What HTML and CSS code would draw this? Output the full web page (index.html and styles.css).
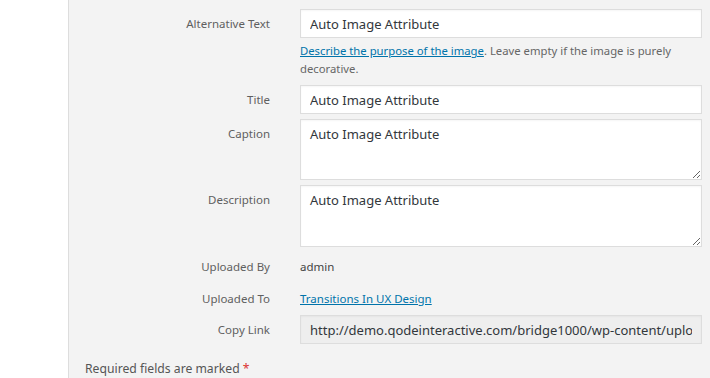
FILE: index.html
```html
<!DOCTYPE html>
<html lang="en">
<head>
    <meta charset="UTF-8">
    <meta name="viewport" content="width=device-width, initial-scale=1.0">
    <title>Attachment Details</title>
    <link rel="stylesheet" href="styles.css">
</head>
<body>
    <div class="side"></div>
    <div class="panel">
        <div class="field">
            <label for="alt">Alternative Text</label>
            <div>
                <input type="text" id="alt" value="Auto Image Attribute">
                <p class="help"><a href="#">Describe the purpose of the image</a>. Leave empty if the image is purely decorative.</p>
            </div>
        </div>
        <div class="field">
            <label for="title">Title</label>
            <input type="text" id="title" value="Auto Image Attribute">
        </div>
        <div class="field">
            <label for="caption">Caption</label>
            <textarea id="caption">Auto Image Attribute</textarea>
        </div>
        <div class="field">
            <label for="description">Description</label>
            <textarea id="description">Auto Image Attribute</textarea>
        </div>
        <div class="field info by">
            <span class="name">Uploaded By</span>
            <span class="value">admin</span>
        </div>
        <div class="field info to">
            <span class="name">Uploaded To</span>
            <span class="value"><a href="#">Transitions In UX Design</a></span>
        </div>
        <div class="field">
            <label for="link">Copy Link</label>
            <input type="text" id="link" class="readonly" readonly value="http://demo.qodeinteractive.com/bridge1000/wp-content/uploads/2017/08/image.jpg">
        </div>
        <p class="required">Required fields are marked <span class="star">*</span></p>
    </div>
</body>
</html>
```

FILE: styles.css
```css
body {
    margin: 0;
    display: flex;
    height: 100vh;
    overflow: hidden;
    font-family: "Noto Sans", Arial, sans-serif;
    font-size: 11.5px;
    color: #444;
    background-color: #fff;
}
.side {
    width: 68px;
    flex-shrink: 0;
    background-color: #fff;
    border-right: 1px solid #ddd;
}
.panel {
    flex: 1;
    background-color: #f3f3f3;
    padding-top: 9px;
}
.field {
    display: grid;
    grid-template-columns: 201px 402px;
    column-gap: 30px;
    margin-bottom: 5px;
}
.field label,
.field .name {
    text-align: right;
    color: #5f5f5f;
    line-height: 20px;
    padding-top: 5px;
}
input,
textarea {
    display: block;
    box-sizing: border-box;
    width: 100%;
    margin: 0;
    border: 1px solid #ddd;
    background-color: #fff;
    color: #32373c;
    font-family: "Noto Sans", Arial, sans-serif;
    font-size: 13px;
    box-shadow: inset 0 1px 2px rgba(0, 0, 0, 0.04);
}
input {
    height: 29px;
    padding: 0 9px;
}
textarea {
    height: 61px;
    padding: 4px 9px;
    line-height: 20px;
    resize: vertical;
}
textarea#description {
    height: 62px;
}
input.readonly {
    background-color: #eee;
}
.help {
    margin: 4px 0 2px;
    color: #666;
    font-size: 11.3px;
    line-height: 18px;
}
a {
    color: #0073aa;
}
.info {
    margin-bottom: 12px;
}
.info .name,
.info .value {
    padding-top: 0;
    line-height: 20px;
}
.field.by {
    margin-top: 10px;
}
.field.to {
    margin-bottom: 6px;
}
.required {
    margin: 15px 0 0 16px;
    color: #555;
    font-size: 12.2px;
    line-height: 20px;
}
.star {
    color: #dc3232;
}
```
